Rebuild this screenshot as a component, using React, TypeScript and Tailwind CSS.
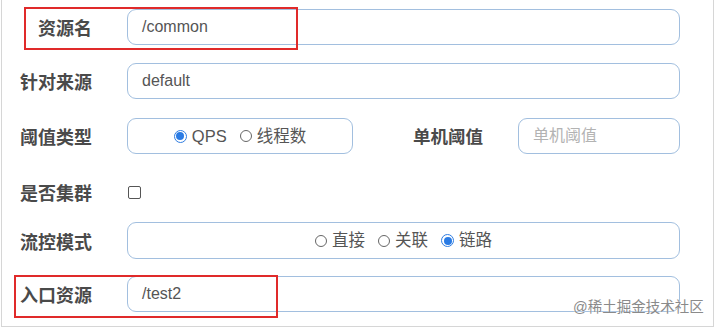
import React from "react";

const font = { fontFamily: '"Liberation Sans", "Noto Sans CJK SC", sans-serif' };

function Label({ children, w = "w-[90px]" }: { children: React.ReactNode; w?: string }) {
  return (
    <div className={`${w} shrink-0 text-right text-[18px] font-bold text-[#4a4a4a] leading-none translate-y-[2px]`}>
      {children}
    </div>
  );
}

function Radio({ checked, label }: { checked?: boolean; label: string }) {
  return (
    <span className="flex items-center gap-[5px]">
      <span
        className={
          checked
            ? "w-[13px] h-[13px] rounded-full border-[1.5px] border-[#2f7de1] bg-white flex items-center justify-center"
            : "w-[12px] h-[12px] rounded-full border border-[#666] bg-white"
        }
      >
        {checked && <span className="w-[8px] h-[8px] rounded-full bg-[#2a7be4]" />}
      </span>
      <span className="text-[16.5px] text-[#555] leading-none">{label}</span>
    </span>
  );
}

const inputCls =
  "h-[36px] rounded-[9px] border-[1.5px] border-[#a2bfdf] bg-white flex items-center pl-[14px] text-[16px] text-[#555]";

export default function App() {
  return (
    <div
      className="relative ml-[1px] w-[713px] h-[327px] border-x border-b border-[#d6d6d6] bg-white overflow-hidden"
      style={font}
    >
      {/* Row 1 */}
      <div className="flex items-center mt-[9px] h-[36px]">
        <Label>资源名</Label>
        <div className={`${inputCls} ml-[35px] w-[553px]`}>/common</div>
      </div>
      {/* Row 2 */}
      <div className="flex items-center mt-[18px] h-[36px]">
        <Label>针对来源</Label>
        <div className={`${inputCls} ml-[35px] w-[553px]`}>default</div>
      </div>
      {/* Row 3 */}
      <div className="flex items-center mt-[19px] h-[36px]">
        <Label>阈值类型</Label>
        <div className={`${inputCls} ml-[35px] w-[226px] justify-center !pl-0 gap-[13px]`}>
          <Radio checked label="QPS" />
          <Radio label="线程数" />
        </div>
        <div className="ml-[60px] w-[70px] shrink-0 text-[17.5px] font-bold text-[#4a4a4a] leading-none whitespace-nowrap translate-y-[2px]">
          单机阈值
        </div>
        <div className={`${inputCls} ml-[35px] w-[162px] text-[#b3b3b3]`}>单机阈值</div>
      </div>
      {/* Row 4 */}
      <div className="flex items-center mt-[22px] h-[32px]">
        <Label>是否集群</Label>
        <div className="ml-[36px] w-[13px] h-[13px] rounded-[2px] border border-[#555] bg-white" />
      </div>
      {/* Row 5 */}
      <div className="flex items-center mt-[14px] h-[37px]">
        <Label>流控模式</Label>
        <div className={`${inputCls} ml-[35px] w-[553px] h-[37px] justify-center !pl-0 gap-[13px]`}>
          <Radio label="直接" />
          <Radio label="关联" />
          <Radio checked label="链路" />
        </div>
      </div>
      {/* Row 6 */}
      <div className="flex items-center mt-[17px] h-[36px]">
        <Label>入口资源</Label>
        <div className={`${inputCls} ml-[35px] w-[553px]`}>/test2</div>
      </div>

      {/* Red highlight boxes */}
      <div className="absolute left-[22px] top-[7px] w-[274px] h-[43px] border-2 border-[#e02a2a]" />
      <div className="absolute left-[12px] top-[275px] w-[264px] h-[43px] border-2 border-[#e02a2a]" />

      {/* Watermark */}
      <div className="absolute left-[571px] top-[300px] text-[14.5px] text-[#8a8a8a] leading-none whitespace-nowrap [text-shadow:0_0_2px_#fff]">
        @稀土掘金技术社区
      </div>
    </div>
  );
}
